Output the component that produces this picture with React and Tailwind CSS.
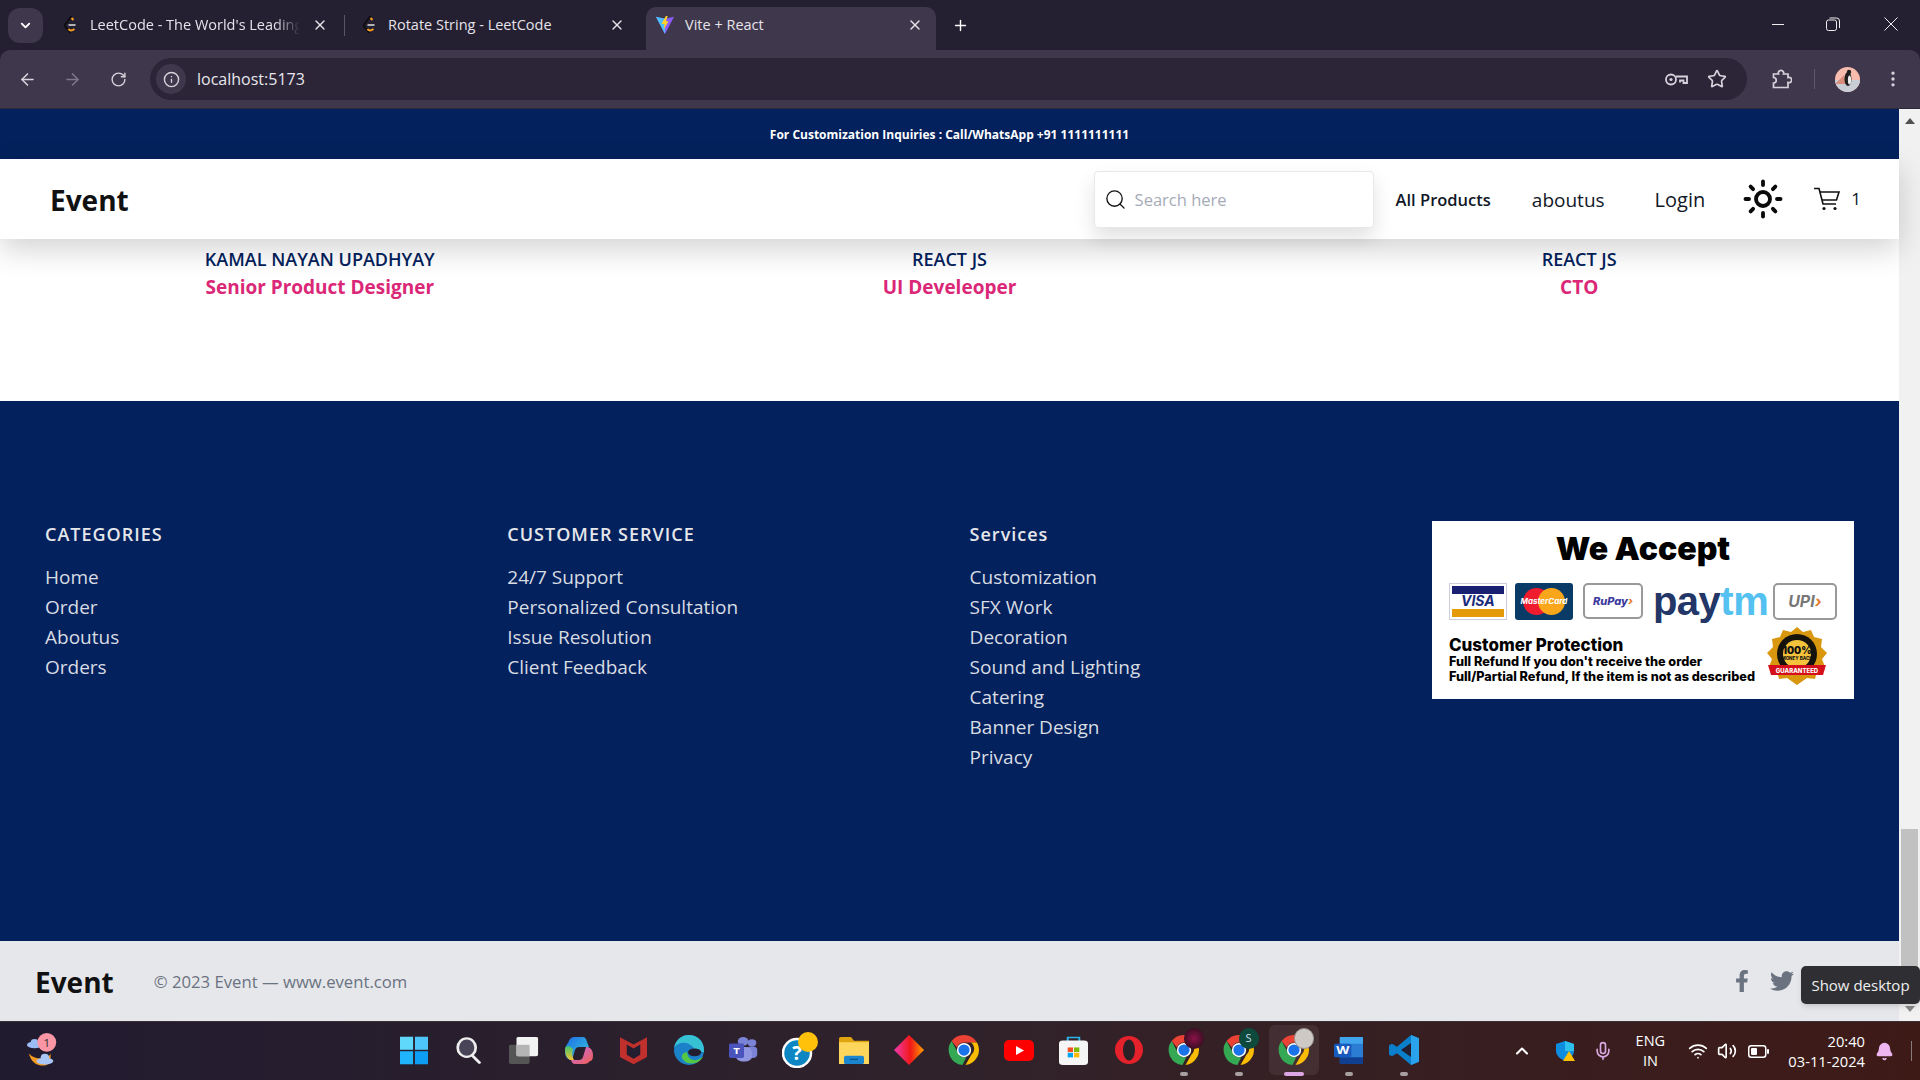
import React from "react";
import { ArrowLeft, ArrowRight, RotateCw, Info, Star, MoreVertical, X, Plus, ChevronDown, Search, Sun, ChevronUp, Mic, Wifi, Volume2, Bell } from "lucide-react";
import { FaFacebookF, FaTwitter } from "react-icons/fa";

const Lc = () => (
  <svg width="17" height="20" viewBox="0 0 16 20" className="shrink-0">
    <path d="M9 1 L3 9 Q1.5 10.5 3 12 L8 18" fill="none" stroke="#0c0c0c" strokeWidth="1.6" />
    <path d="M11 5 L9 3 M6 14 Q8 17 12 14" fill="none" stroke="#f89f1b" strokeWidth="2" />
    <path d="M6 10 H13" stroke="#b3b3b3" strokeWidth="2" />
  </svg>
);
const Vite = () => (
  <svg width="20" height="22" viewBox="0 0 22 22" className="shrink-0">
    <path d="M1 2 L11 4 L21 2 L11 21 Z" fill="#8b5cf6" />
    <path d="M1 2 L11 4 L11 21 Z" fill="#41d1ff" opacity=".85" />
    <path d="M12 1 L7 10 L10.5 10 L9.5 16 L15 7 L12 7 L14 1 Z" fill="#ffd028" />
  </svg>
);
const Tab = ({ icon, title, w, active, fade, gap = "ml-[10px]" }) => (
  <div className={`flex items-center h-[43px] pb-[7px] rounded-t-[10px] shrink-0 ${w} ${active ? "bg-[#3f384c]" : ""}`}>
    {icon}
    <span className={`${gap} mr-[12px] text-[14.5px] text-[#e6e3ea] whitespace-nowrap overflow-hidden flex-1 ${fade ? "[mask-image:linear-gradient(90deg,#000_88%,transparent)]" : ""}`}>{title}</span>
    <X size={16} className="text-[#e6e3ea] shrink-0" />
  </div>
);

const ChromeLogo = ({ s = 36 }) => (
  <svg width={s} height={s} viewBox="0 0 48 48">
    <path d="M24 4a20 20 0 0 1 17.3 10H24a10 10 0 0 0-9.4 6.5L7.5 12A20 20 0 0 1 24 4z" fill="#ea4335" />
    <path d="M41.3 14A20 20 0 0 1 26 43.9L34 30a10 10 0 0 0-1-16z" fill="#fbbc04" />
    <path d="M7.5 12L16 28a10 10 0 0 0 11 5.5L22 43.9A20 20 0 0 1 7.5 12z" fill="#34a853" />
    <circle cx="24" cy="24" r="9.5" fill="#fff" />
    <circle cx="24" cy="24" r="7.5" fill="#1a73e8" />
  </svg>
);
const TBtn = ({ children, under, active }) => (
  <div className="relative w-[55px] h-[54px] flex items-center justify-center">
    {active && <span className="absolute left-[3px] top-[2px] w-[50px] h-[50px] rounded-md bg-[#ffffff12]" />}
    <span className="relative flex">{children}</span>
    {under && <span className={`absolute bottom-[1px] left-1/2 -translate-x-1/2 h-[4px] rounded-full ${active ? "w-[20px] bg-[#dba6e3]" : "w-[8px] bg-[#a8a0a0]"}`} />}
  </div>
);
const Ic = ({ w, h, vw, vh, children }) => (
  <svg width={w} height={h} viewBox={`0 0 ${vw} ${vh}`} preserveAspectRatio="none">{children}</svg>
);

const Taskbar = () => (
  <div className="h-[59px] shrink-0 flex items-center border-t border-[#3a3036] bg-gradient-to-r from-[#211b30] via-[#30222a] to-[#3e1a17] text-white font-['Open_Sans',sans-serif] relative z-20">
    <div className="w-[386px] shrink-0 pl-[26px] mb-[2px]">
      <svg width="34" height="34" viewBox="0 0 36 40" preserveAspectRatio="none">
        <path d="M3 24 q4 16 18 14 q6-2 5-14 q-2 6-10 6 q-8 0-13-6z" fill="#f39a1f" />
        <ellipse cx="9" cy="14" rx="8" ry="4" fill="#9bbcf5" /><circle cx="9" cy="11" r="4" fill="#9bbcf5" />
        <ellipse cx="20" cy="33" rx="9" ry="4" fill="#a9c6f7" /><circle cx="20" cy="29" r="4.5" fill="#a9c6f7" />
        <ellipse cx="22" cy="11" rx="10" ry="11" fill="#fb97a5" />
        <text x="22" y="16" fontSize="13" textAnchor="middle" fill="#333" fontFamily="Open Sans">1</text>
      </svg>
    </div>
    <div className="flex items-center mb-[2px]">
      <TBtn><Ic w={28} h={29} vw={30} vh={40}><rect y="1" width="14" height="18" fill="#5fd8fb" /><rect x="16" y="1" width="14" height="18" fill="#4ec6fb" /><rect y="21" width="14" height="18" fill="#1fb4fb" /><rect x="16" y="21" width="14" height="18" fill="#0e9df5" /></Ic></TBtn>
      <TBtn><Ic w={27} h={27} vw={30} vh={38}><ellipse cx="13" cy="15" rx="10" ry="13" fill="#4a4458" stroke="#eee" strokeWidth="3" /><path d="M20 27 L27 36" stroke="#eee" strokeWidth="3.5" strokeLinecap="round" /></Ic></TBtn>
      <TBtn><Ic w={30} h={27} vw={32} vh={38}><rect x="0" y="11" width="22" height="27" rx="2" fill="#555" /><rect x="8" y="0" width="23" height="27" rx="2" fill="#f2f2f2" /><rect x="8" y="11" width="14" height="16" fill="#b5b5b5" /></Ic></TBtn>
      <TBtn><svg width="30" height="27" viewBox="0 0 30 27"><defs><linearGradient id="cpa" x1="0" y1="0" x2="1" y2="1"><stop offset="0" stopColor="#1f6fe8" /><stop offset="1" stopColor="#36c8d8" /></linearGradient><linearGradient id="cpb" x1="0" y1="0" x2="1" y2="1"><stop offset="0" stopColor="#c06ae8" /><stop offset="1" stopColor="#f2604f" /></linearGradient><linearGradient id="cpc" x1="0" y1="0" x2="0" y2="1"><stop offset="0" stopColor="#3fc46f" /><stop offset="1" stopColor="#f7c22f" /></linearGradient></defs><path d="M10 0 H19 Q22 0 23 5 L25 10 H15 Q12 10 11 13 L8 23 H6 Q1 21 1 15 Q1 9 4 6 Q6 0 10 0Z" fill="url(#cpa)" /><path d="M1 12 Q1 20 6 23 H10 Q7 18 9 12 L5 9 Q1 9 1 12Z" fill="url(#cpc)" /><path d="M20 27 H11 Q8 27 7 23 H15 Q18 23 19 20 L22 10 H24 Q29 12 29 18 Q29 24 26 24 Q24 27 20 27Z" fill="url(#cpb)" /></svg></TBtn>
      <TBtn><Ic w={27} h={30} vw={28} vh={38}><path d="M0 3 L14 12 L28 3 V28 L14 37 L0 28Z" fill="#c0302c" /><path d="M7 12 L14 17 L21 12 V25 L14 30 L7 25Z" fill="#221d2f" /></Ic></TBtn>
      <TBtn><Ic w={30} h={30} vw={32} vh={38}><ellipse cx="16" cy="19" rx="16" ry="19" fill="#1b82c9" /><path d="M32 19 C32 7 24 0 16 0 C8 0 2 6 0 16 C4 9 12 8 17 12 C21 15 22 18 22 20 L32 22Z" fill="#37c2d4" /><ellipse cx="22" cy="22" rx="7" ry="5" fill="#221d2f" /><path d="M14 22 C14 32 24 36 31 27 C28 37 14 40 9 30 C7 26 10 22 14 22" fill="#54c745" /></Ic></TBtn>
      <TBtn><Ic w={30} h={26} vw={34} vh={36}><circle cx="26" cy="8" r="5" fill="#7b83d6" /><rect x="20" y="13" width="12" height="16" rx="5" fill="#7b83d6" /><circle cx="16" cy="6" r="6" fill="#7b83d6" /><rect x="8" y="14" width="18" height="20" rx="7" fill="#8f95e0" /><rect x="0" y="9" width="17" height="20" rx="2" fill="#4b53bc" /><text x="8.5" y="24" fontSize="13" fontWeight="700" fill="#fff" textAnchor="middle" fontFamily="Open Sans">T</text></Ic></TBtn>
      <TBtn><svg width="36" height="36" viewBox="0 0 36 36" className="ml-[2px]"><circle cx="15" cy="21" r="14" fill="#0d87c4" stroke="#fff" strokeWidth="2.5" /><text x="15" y="28" fontSize="20" fontWeight="700" fill="#fff" textAnchor="middle" fontFamily="Open Sans">?</text><circle cx="26" cy="10" r="10" fill="#ffc10a" /></svg></TBtn>
      <TBtn><Ic w={30} h={27} vw={30} vh={36}><path d="M0 2 a2 2 0 0 1 2-2 h10 l3 5 h15 v31 H0z" fill="#e0a410" /><rect y="7" width="30" height="29" fill="#ffd65c" /><rect x="5" y="25" width="20" height="11" rx="2" fill="#1a86d0" /><rect x="11" y="29" width="8" height="1.5" fill="#0b4d80" /></Ic></TBtn>
      <TBtn><Ic w={30} h={30} vw={30} vh={38}><defs><linearGradient id="dm" x1="0" x2="1"><stop offset="0" stopColor="#f03ab0" /><stop offset=".55" stopColor="#f01818" /><stop offset="1" stopColor="#ffa000" /></linearGradient></defs><path d="M15 0 L30 19 L15 38 L0 19Z" fill="url(#dm)" /></Ic></TBtn>
      <TBtn><ChromeLogo /></TBtn>
      <TBtn><svg width="30" height="21" viewBox="0 0 30 21"><rect width="30" height="21" rx="5" fill="#f00" /><path d="M12 6 L20 10.5 L12 15Z" fill="#fff" /></svg></TBtn>
      <TBtn><Ic w={29} h={29} vw={30} vh={38}><path d="M9 8 V2 H21 V8" fill="none" stroke="#2bb5ea" strokeWidth="2" /><rect y="6" width="30" height="32" rx="4" fill="#f5f5f5" /><rect x="9" y="15" width="5.5" height="6" fill="#f25022" /><rect x="15.5" y="15" width="5.5" height="6" fill="#7fba00" /><rect x="9" y="22" width="5.5" height="6" fill="#00a4ef" /><rect x="15.5" y="22" width="5.5" height="6" fill="#ffb900" /></Ic></TBtn>
      <TBtn><svg width="28" height="28" viewBox="0 0 28 28"><circle cx="14" cy="14" r="14" fill="#e5212c" /><ellipse cx="14" cy="14" rx="6" ry="10.5" fill="#2a2026" /></svg></TBtn>
      <TBtn under><ChromeLogo /><span className="absolute top-[-4px] right-[-2px] w-[20px] h-[21px] rounded-full bg-[radial-gradient(circle,#8a1248,#1d0c14)]" /></TBtn>
      <TBtn under><ChromeLogo /><span className="absolute top-[-4px] right-[-2px] w-[20px] h-[21px] rounded-full bg-[#0d4a3c] text-[11px] text-[#cde] flex items-center justify-center">S</span></TBtn>
      <TBtn under active><ChromeLogo /><span className="absolute top-[-4px] right-[-2px] w-[20px] h-[21px] rounded-full bg-[#cfc9c6] border border-[#9a9490]" /></TBtn>
      <TBtn under><Ic w={29} h={27} vw={30} vh={36}><rect x="6" width="24" height="36" rx="2" fill="#2b7cd3" /><rect x="6" width="24" height="9" fill="#41a5ee" /><rect x="6" y="27" width="24" height="9" fill="#103f91" /><rect y="9" width="18" height="18" rx="2" fill="#185abd" /><text x="9" y="23" fontSize="14" fontWeight="700" fill="#fff" textAnchor="middle" fontFamily="Open Sans">W</text></Ic></TBtn>
      <TBtn under><Ic w={30} h={30} vw={30} vh={38}><path d="M22 0 L30 4 V34 L22 38 L8 23 L3 27 L0 25 V13 L3 11 L8 15Z" fill="#0a7fcb" /><path d="M22 0 L30 4 V34 L22 38Z" fill="#2ba3ec" /><path d="M22 10 L12 19 L22 28Z" fill="#221d2f" /></Ic></TBtn>
    </div>
    <div className="relative ml-auto flex items-center h-full">
      <ChevronUp size={20} strokeWidth={2.5} className="text-white mr-[23px]" />
      <svg width="20" height="20" viewBox="0 0 20 20" className="mr-[18px]"><path d="M1 3 L10 0 L19 3 V10 Q19 16 10 20 Q1 16 1 10Z" fill="#0e8de0" /><path d="M10 0 L19 3 V10 H10Z" fill="#2ec1ee" /><path d="M14 10 L20 20 H8Z" fill="#ffc107" /></svg>
      <Mic size={20} className="text-[#d9a8e0] mr-[17px]" />
      <div className="w-[40px] text-center text-[14.5px] leading-[20px] mr-[18px]"><div>ENG</div><div>IN</div></div>
      <Wifi size={20} className="mr-[9px]" />
      <Volume2 size={20} className="mr-[11px]" />
      <svg width="21" height="13" viewBox="0 0 21 13" fill="none" className="mr-[19px]"><rect x=".75" y=".75" width="17" height="11.5" rx="2.5" stroke="#fff" strokeWidth="1.5" /><rect x="3" y="3" width="6" height="7" rx="1" fill="#fff" /><rect x="19" y="4" width="2" height="5" rx="1" fill="#fff" /></svg>
      <div className="text-right text-[14.7px] leading-[20px] whitespace-nowrap mr-[10px]"><div>20:40</div><div>03-11-2024</div></div>
      <Bell size={19} fill="#eeb5f0" className="text-[#eeb5f0] mr-[17px]" />
      <span className="w-px h-[20px] bg-[#8a7a7a] mr-[8px]" />
    </div>
  </div>
);

const BrowserChrome = () => (
  <div className="shrink-0 bg-[#241f31] font-['Open_Sans',sans-serif]">
    <div className="h-[50px] flex items-start pl-[8px] pt-[7px]">
      <div className="w-[35px] h-[35px] mt-[1px] rounded-[12px] bg-[#3f384c] flex items-center justify-center shrink-0"><ChevronDown size={15} strokeWidth={3} className="text-white" /></div>
      <Tab icon={<Lc />} title="LeetCode - The World's Leading" w="w-[266px] ml-[19px]" gap="ml-[11px]" fade />
      <span className="w-px h-[21px] bg-[#5a5464] mt-[8px] ml-[16px] shrink-0" />
      <Tab icon={<Lc />} title="Rotate String - LeetCode" w="w-[264px] ml-[16px]" />
      <Tab icon={<Vite />} title="Vite + React" w="w-[290px] ml-[21px] pl-[9px] pr-[13px]" active />
      <Plus size={17} strokeWidth={2} className="text-white ml-[16px] mt-[10px] shrink-0" />
      <div className="ml-auto flex items-center gap-[41px] pr-[22px] mt-[10px] text-[#eee]">
        <svg width="14" height="14" viewBox="0 0 14 14" stroke="currentColor"><path d="M1 7.5 H13" /></svg>
        <svg width="14" height="14" viewBox="0 0 14 14" fill="none" stroke="currentColor"><rect x=".5" y="3" width="10" height="10.5" rx="2" /><path d="M3.5 1 h7 a3 3 0 0 1 3 3 v7" /></svg>
        <svg width="14" height="14" viewBox="0 0 14 14" stroke="currentColor" className="ml-[3px]"><path d="M.5 .5 L13.5 13.5 M13.5 .5 L.5 13.5" /></svg>
      </div>
    </div>
    <div className="h-[59px] bg-[#3f384c] rounded-t-[10px] flex items-center pl-[18px] text-[#d6d2dc] border-b border-[#2c2a38]">
      <ArrowLeft size={19} /><ArrowRight size={19} className="ml-[26px] text-[#7d7789]" /><RotateCw size={17} className="ml-[28px]" />
      <div className="ml-[23px] h-[42px] w-[1597px] shrink-0 rounded-full bg-[#2b2537] flex items-center pl-[6px] pr-[20px]">
        <span className="w-[30px] h-[30px] rounded-full bg-[#3f384c] flex items-center justify-center"><Info size={17} /></span>
        <span className="ml-[11px] text-[16px] text-[#e8e6ec]">localhost:5173</span>
        <svg width="23" height="13" viewBox="0 0 23 13" fill="none" stroke="currentColor" strokeWidth="1.8" className="ml-auto mr-[19px]"><circle cx="6" cy="6.5" r="5" /><circle cx="6" cy="6.5" r="1.6" fill="currentColor" stroke="none" /><path d="M11 3.5 H22 V10 H18.5 V7.5 H15 V9.5" /></svg>
        <Star size={20} />
      </div>
      <svg width="20" height="20" viewBox="0 0 20 20" fill="none" stroke="currentColor" strokeWidth="1.7" className="ml-[25px]"><path d="M1.5 5 H6.5 a2.7 2.7 0 1 1 5 0 H16 V8.5 a2.7 2.7 0 1 1 0 5 V18.5 H1.5 V14 a2.7 2.7 0 1 0 0-5.5 Z" /></svg>
      <span className="w-px h-[20px] bg-[#5f586c] ml-[22px]" />
      <svg width="25" height="25" viewBox="0 0 25 25" className="ml-[20px]"><defs><clipPath id="av"><circle cx="12.5" cy="12.5" r="12.5" /></clipPath></defs><g clipPath="url(#av)"><rect width="25" height="25" fill="#f8bcae" /><rect y="13" width="25" height="12" fill="#c9cdd6" /><path d="M0 17 L9 8 L12 17Z" fill="#d98d7c" /><ellipse cx="13" cy="12" rx="3.5" ry="7" fill="#1e1e1e" /><circle cx="14" cy="5" r="2.2" fill="#1e1e1e" /><ellipse cx="14.5" cy="13" rx="1.6" ry="4.5" fill="#eee" /></g></svg>
      <MoreVertical size={20} className="ml-[23px]" />
    </div>
  </div>
);

const cols = [
  { t: "CATEGORIES", l: ["Home", "Order", "Aboutus", "Orders"] },
  { t: "CUSTOMER SERVICE", l: ["24/7 Support", "Personalized Consultation", "Issue Resolution", "Client Feedback"] },
  { t: "Services", l: ["Customization", "SFX Work", "Decoration", "Sound and Lighting", "Catering", "Banner Design", "Privacy"] },
];
const team = [
  ["KAMAL NAYAN UPADHYAY", "Senior Product Designer"],
  ["REACT JS", "UI Develeoper"],
  ["REACT JS", "CTO"],
];

const Accept = () => (
  <div className="w-[422px] h-[178px] bg-white px-[17px] pt-[10px] text-black font-['Inter',sans-serif]">
    <div className="text-center text-[32px] leading-[36px] font-black">We Accept</div>
    <div className="flex items-center mt-[15px] h-[38px]">
      <div className="w-[58px] h-[37px] shrink-0 border border-[#ccd] flex flex-col justify-between p-[2px] bg-white"><span className="h-[8px] bg-[#1a2071]" /><span className="text-[14px] leading-[14px] italic font-bold text-[#1a2a7a] text-center">VISA</span><span className="h-[8px] bg-[#e59a0a]" /></div>
      <div className="w-[58px] h-[37px] shrink-0 ml-[8px] rounded-[3px] bg-[#0a3a66] relative overflow-hidden flex items-center justify-center">
        <span className="absolute left-[8px] w-[27px] h-[27px] rounded-full bg-[#ee1c2e]" /><span className="absolute right-[8px] w-[27px] h-[27px] rounded-full bg-[#f9a61a]" />
        <span className="relative text-[8px] italic font-bold text-white whitespace-nowrap">MasterCard</span>
      </div>
      <div className="w-[60px] h-[36px] shrink-0 ml-[10px] rounded-[5px] border-2 border-[#999] flex items-center justify-center text-[11px] italic font-extrabold text-[#3d3aa0]">RuPay<span className="text-[#e8792a]">›</span></div>
      <div className="w-[110px] shrink-0 ml-[10px] text-[40px] leading-[38px] font-bold tracking-[-0.5px] text-[#233668] whitespace-nowrap font-['Liberation_Sans',sans-serif]">pay<span className="text-[#54c1f0]">tm</span></div>
      <div className="w-[64px] h-[37px] shrink-0 ml-auto rounded-[5px] border-2 border-[#999] flex items-center justify-center text-[16px] italic font-bold text-[#777]">UPI<span className="text-[#e8792a]">›</span></div>
    </div>
    <div className="flex items-start mt-[16px]">
      <div className="w-[318px] shrink-0">
        <div className="text-[17px] leading-[18px] font-extrabold">Customer Protection</div>
        <div className="text-[12.7px] leading-[15px] font-extrabold whitespace-nowrap">Full Refund If you don't receive the order</div>
        <div className="text-[12.7px] leading-[15px] font-extrabold whitespace-nowrap">Full/Partial Refund, If the item is not as described</div>
      </div>
      <svg width="60" height="60" viewBox="0 0 60 60" className="mt-[-9px] shrink-0">
        <polygon points="30,0 36,5 44,3 47,10 55,12 54,20 60,26 55,32 58,40 50,44 48,52 40,51 30,58 20,51 12,52 10,44 2,40 5,32 0,26 6,20 5,12 13,10 16,3 24,5" fill="#d9960f" />
        <circle cx="30" cy="27" r="20" fill="#15120c" /><circle cx="30" cy="27" r="14" fill="#f5c23b" />
        <text x="30" y="27" fontSize="10" fontWeight="900" textAnchor="middle" fill="#111">100%</text>
        <text x="30" y="33" fontSize="4.5" fontWeight="800" textAnchor="middle" fill="#111">MONEY BACK</text>
        <path d="M1 38 L59 38 L56 48 L4 48Z" fill="#d5101c" />
        <text x="30" y="45.5" fontSize="6" fontWeight="800" textAnchor="middle" fill="#fff">GUARANTEED</text>
      </svg>
    </div>
  </div>
);

const Scrollbar = () => (
  <div className="w-[21px] shrink-0 bg-[#f1f1f1] flex flex-col items-center relative">
    <span className="mt-[9px] w-0 h-0 border-x-[5px] border-x-transparent border-b-[6px] border-b-[#505050]" />
    <div className="mt-auto h-[170px] w-[17px] bg-[#c1c1c1]" />
    <span className="mt-[7px] mb-[9px] w-0 h-0 border-x-[5px] border-x-transparent border-t-[6px] border-t-[#888]" />
  </div>
);

export default function App() {
  return (
    <div className="w-[1920px] h-[1080px] overflow-hidden flex flex-col bg-white font-['Open_Sans',sans-serif]">
      <BrowserChrome />
      <div className="h-[912px] shrink-0 flex relative">
        <div className="flex-1 min-w-0 flex flex-col">
          <div className="h-[50px] pt-[2px] bg-[#03215c] flex items-center justify-center text-white text-[12px] font-bold shrink-0">For Customization Inquiries : Call/WhatsApp +91 1111111111</div>
          <div className="relative z-10 h-[80px] shrink-0 bg-white shadow-[0_10px_30px_rgba(0,0,0,0.18)] flex items-center pl-[50px]">
            <div className="text-[28px] font-bold text-[#111] mt-[2px]">Event</div>
            <div className="ml-auto flex items-center">
              <div className="w-[280px] h-[57px] rounded border border-[#e8e8e8] shadow-[0_10px_20px_rgba(0,0,0,0.12)] flex items-center pl-[9px] bg-white">
                <Search size={23} strokeWidth={1.4} className="text-[#111]" />
                <span className="ml-[8px] mt-[2px] text-[16.5px] text-[#a6abb8]">Search here</span>
              </div>
              <span className="ml-[22px] mt-[2px] text-[16.5px] font-semibold text-[#111827]">All Products</span>
              <span className="ml-[41px] mt-[2px] text-[19px] font-medium text-[#111827]">aboutus</span>
              <span className="ml-[50px] mt-[2px] text-[20px] font-medium text-[#111827]">Login</span>
              <Sun size={42} strokeWidth={2.2} className="ml-[37px] text-[#0a0a0a]" />
              <svg width="26" height="24" viewBox="0 0 26 24" fill="none" stroke="#111" strokeWidth="1.6" className="ml-[30px]"><path d="M0 1.5 H5 L9 17 H22" /><path d="M6 5 H25 L22.5 13 H8" /><circle cx="10" cy="21.5" r="1.6" fill="#111" stroke="none" /><circle cx="21" cy="21.5" r="1.6" fill="#111" stroke="none" /></svg>
              <span className="ml-[11px] mr-[38px] text-[17px] text-[#111827]">1</span>
            </div>
          </div>
          <div className="h-[162px] shrink-0 grid grid-cols-3 pl-[5px] pr-[5px] pt-[5px] text-center">
            {team.map((m, i) => (
              <div key={i}>
                <div className="text-[18px] leading-[30px] font-semibold text-[#03215c]">{m[0]}</div>
                <div className="text-[19px] leading-[26px] font-bold text-[#db2777]">{m[1]}</div>
              </div>
            ))}
          </div>
          <div className="h-[540px] shrink-0 bg-[#03215c] flex pl-[45px] pt-[120px]">
            {cols.map((c) => (
              <div key={c.t} className="w-[462.3px] shrink-0 text-[#d8dce3]">
                <div className="text-[18px] leading-[26px] font-semibold tracking-[1px] text-[#e5e7eb]">{c.t}</div>
                <div className="mt-[15px] flex flex-col">
                  {c.l.map((x) => <div key={x} className="text-[19px] leading-[30px]">{x}</div>)}
                </div>
              </div>
            ))}
            <Accept />
          </div>
          <div className="h-[80px] shrink-0 bg-[#e5e7eb] flex items-center pl-[35px] pr-[105px]">
            <div className="text-[28px] font-bold text-[#111] mt-[2px]">Event</div>
            <div className="ml-[40px] mt-[1px] text-[16.7px] text-[#6b7280]">© 2023 Event — www.event.com</div>
            <div className="ml-auto flex items-center text-[#6b7280]">
              <FaFacebookF size={22} />
              <FaTwitter size={24} className="ml-[17px]" />
            </div>
          </div>
        </div>
        <Scrollbar />
        <div className="absolute z-30 right-0 top-[857px] h-[38px] w-[119px] rounded-[5px] bg-[#2f2f33] text-[#f0f0f0] text-[15px] flex items-center justify-center shadow-md">Show desktop</div>
      </div>
      <Taskbar />
    </div>
  );
}
